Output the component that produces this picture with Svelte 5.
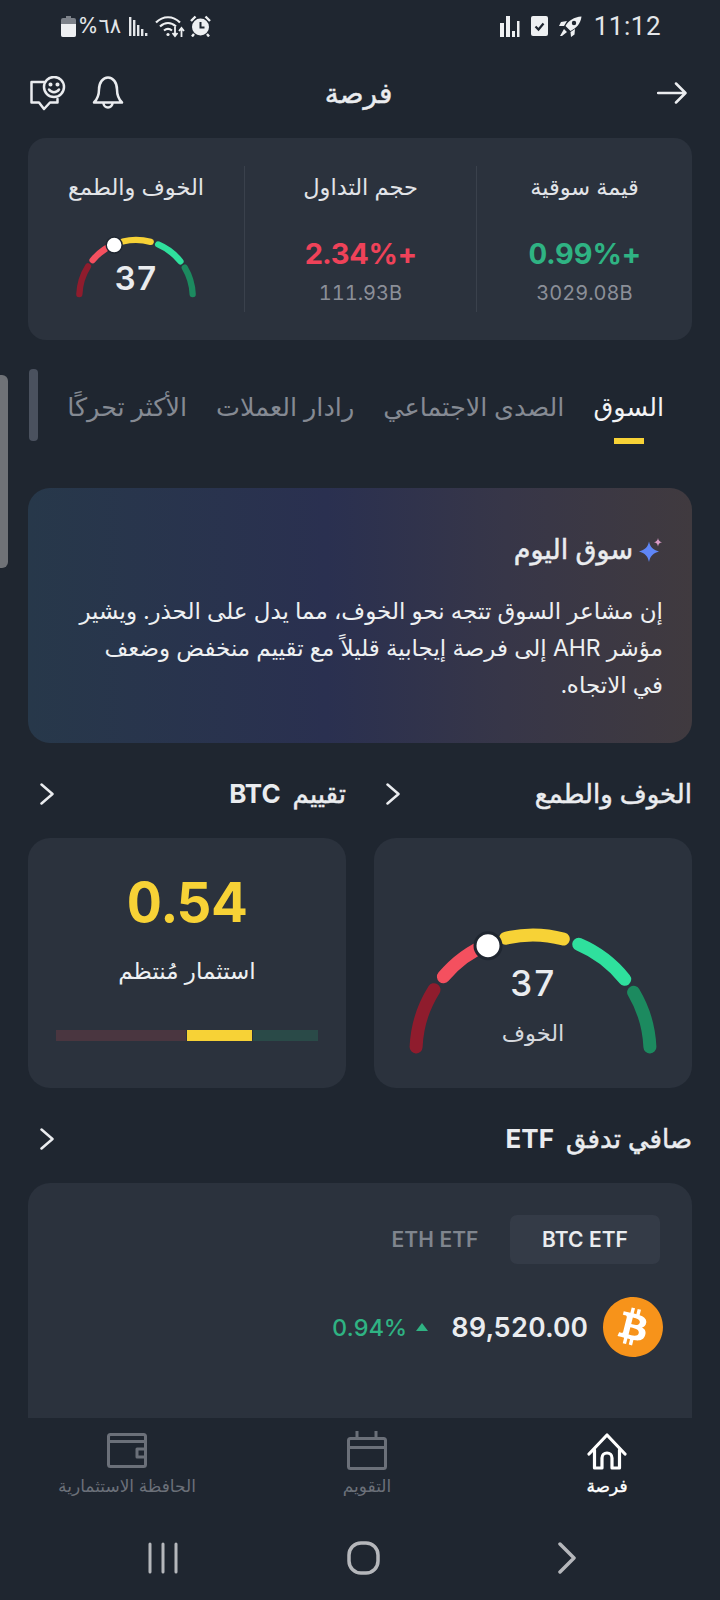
<script>
  // gauge arcs, angles in degrees measured from the right end of the dial
  const cx = 130;
  const cy = 125;
  const r = 117;

  const point = (deg) => {
    const rad = (deg * Math.PI) / 180;
    return `${(cx + r * Math.cos(rad)).toFixed(1)} ${(cy - r * Math.sin(rad)).toFixed(1)}`;
  };

  const segments = [
    { from: 177.5, to: 147.8, color: "#8f1c2d" },
    { from: 140, to: 112, color: "#f4505f" },
    { from: 103.5, to: 75, color: "#f7d236" },
    { from: 67, to: 38.4, color: "#2fe09d" },
    { from: 30.7, to: 2.5, color: "#1c8a5f" },
  ].map((s) => ({ ...s, d: `M${point(s.from)} A${r} ${r} 0 0 1 ${point(s.to)}` }));

  const stats = [
    { title: "قيمة سوقية", value: "+0.99%", sub: "3029.08B", tone: "up" },
    { title: "حجم التداول", value: "+2.34%", sub: "111.93B", tone: "down" },
  ];

  const tabs = ["السوق", "الصدى الاجتماعي", "رادار العملات", "الأكثر تحركًا"];
</script>

{#snippet gauge(width, height, knob)}
  <svg class="dial" {width} {height} viewBox="0 0 260 134" fill="none">
    {#each segments as s}
      <path d={s.d} stroke={s.color} stroke-width="13" stroke-linecap="round" />
    {/each}
    <circle cx="85" cy="18.7" r={knob} fill="#fff" stroke="#1f2630" stroke-width="3" />
  </svg>
{/snippet}

{#snippet chevron()}
  <svg class="chev" width="14" height="22" viewBox="0 0 14 22" fill="none">
    <path d="M1.5 1.5 12.5 11 1.5 20.5" stroke="#eaecef" stroke-width="2.5" stroke-linecap="round" stroke-linejoin="round" />
  </svg>
{/snippet}

<div class="screen">
  <div class="status">
    <div class="status-left">
      <svg width="15" height="21" viewBox="0 0 15 21">
        <path d="M5 0h5v2h3a2 2 0 0 1 2 2v15a2 2 0 0 1-2 2H2a2 2 0 0 1-2-2V4a2 2 0 0 1 2-2h3z" fill="#7d828a" />
        <path d="M0 8h15v11a2 2 0 0 1-2 2H2a2 2 0 0 1-2-2z" fill="#eef0f2" />
      </svg>
      <span class="pct" dir="rtl">٦٨%</span>
      <svg class="sig" width="19" height="19" viewBox="0 0 19 19" fill="#e4e6e9">
        <rect x="0" y="0" width="2.4" height="19" />
        <rect x="4" y="3" width="2.4" height="16" />
        <rect x="8" y="8" width="2.4" height="11" />
        <rect x="12" y="12" width="2.4" height="7" />
        <rect x="16" y="16" width="2.4" height="3" />
      </svg>
      <svg class="wifi" width="30" height="23" viewBox="0 0 30 23" fill="none" stroke="#eef0f2" stroke-width="2.2">
        <path d="M1 7.5C8 .5 18 .5 25 7.5" />
        <path d="M5 11.5c5-4.6 11-4.6 16 0" />
        <path d="M9 15.5c3-2.4 5-2.4 8 0" />
        <circle cx="13" cy="19.5" r="1.6" fill="#eef0f2" stroke="none" />
        <path d="M20 12v9M17.5 18l2.5 3 2.500-3M26.500 22v-9M24 16l2.500-3 2.500 3" stroke-width="1.800" />
      </svg>
      <svg class="alarm" width="21" height="22" viewBox="0 0 21 22">
        <circle cx="10.500" cy="12" r="8.500" fill="#eef0f2" />
        <path d="M1 6 5.500 1.500M20 6l-4.500-4.500M4 19l-2 2.500M17 19l2 2.500" stroke="#eef0f2" stroke-width="2.400" />
        <path d="M10.500 7v5.500h4" fill="none" stroke="#1f2630" stroke-width="2" />
      </svg>
    </div>
    <div class="status-right">
      <svg width="20" height="21" viewBox="0 0 20 21" fill="#eef0f2">
        <rect x="0" y="7" width="4" height="14" />
        <rect x="6" y="0" width="4" height="21" />
        <rect x="12" y="15" width="3" height="6" />
        <rect x="17" y="5" width="2.500" height="16" />
      </svg>
      <svg class="chk" width="17" height="20" viewBox="0 0 17 20">
        <rect width="17" height="20" rx="2" fill="#eef0f2" />
        <path d="M4.500 10.500 7.500 13.500 12.500 7.500" fill="none" stroke="#1f2630" stroke-width="2.200" />
      </svg>
      <svg class="rocket" width="23" height="21" viewBox="0 0 23 21" fill="#eef0f2">
        <path d="M22.500.5C15 1 9.500 4.500 6.500 10l5 5c6-3 10-7 11-14.500zM15 4.800a2.200 2.200 0 1 1 0 4.400 2.200 2.200 0 0 1 0-4.400z" fill-rule="evenodd" />
        <path d="M8 5 2 6 0 10h5zM16 13l-.5 5.500L12 21l-.5-5zM5 13l3 3-5 4H1z" />
      </svg>
      <span class="time">11:12</span>
    </div>
  </div>

  <header dir="rtl">
    <svg width="30" height="22" viewBox="0 0 30 22" fill="none">
      <path d="M1 11H28M19 1.500 28.500 11 19 20.500" stroke="#eaecef" stroke-width="2.500" stroke-linecap="round" stroke-linejoin="round" />
    </svg>
    <h1>فرصة</h1>
    <div class="head-icons">
      <svg width="32" height="34" viewBox="0 0 32 34" fill="none" stroke="#eaecef" stroke-width="2.500" stroke-linejoin="round">
        <path d="M2 26.500C5.500 23 7 20 7 13.500 7 6.500 11 1.500 16 1.500s9 5 9 12c0 6.500 1.500 9.500 5 13z" />
        <path d="M11.500 27a4.500 4.500 0 0 0 9 0" />
      </svg>
      <svg width="36" height="35" viewBox="0 0 36 35" fill="none" stroke="#eaecef" stroke-width="2.500" stroke-linejoin="round" stroke-linecap="round">
        <circle cx="24" cy="11" r="10" />
        <path d="M19 13.500c2.500 3.500 7.500 3.500 10 0" />
        <path d="M14 6H1.500v20.500H9l5 6.500 6-6.500h7.500V23" />
        <circle cx="20.500" cy="8.500" r=".8" fill="#eaecef" />
        <circle cx="27.500" cy="8.500" r=".8" fill="#eaecef" />
      </svg>
    </div>
  </header>

  <main dir="rtl">
    <section class="card overview">
      {#each stats as stat}
        <div class="stat">
          <div class="stat-title">{stat.title}</div>
          <div class="stat-value {stat.tone}">{stat.value}</div>
          <div class="stat-sub" dir="ltr">{stat.sub}</div>
        </div>
      {/each}
      <div class="stat">
        <div class="stat-title">الخوف والطمع</div>
        <div class="mini-gauge">
          {@render gauge(126, 65, 16.5)}
          <span class="mini-num">37</span>
        </div>
      </div>
    </section>

    <nav class="tabs">
      {#each tabs as tab, i}
        <div class="tab" class:active={i === 0}>
          <span>{tab}</span>
          {#if i === 0}<i class="underline"></i>{/if}
        </div>
      {/each}
      <i class="tab-edge"></i>
    </nav>

    <section class="insight">
      <h2>
        <svg width="24" height="24" viewBox="0 0 24 24">
          <path d="M10 3.500C11.200 9 14 11.800 20 13.500 14 15.200 11.200 18 10 24 8.800 18 6 15.200 0 13.500 6 11.800 8.800 9 10 3.500z" fill="#5f86f7" />
          <path d="M19 0c.5 2.600 1.400 3.600 4 4.200-2.600.6-3.500 1.600-4 4.300-.5-2.700-1.400-3.700-4-4.300 2.600-.6 3.500-1.600 4-4.200z" fill="#d99ac4" />
        </svg>
        سوق اليوم
      </h2>
      <p>إن مشاعر السوق تتجه نحو الخوف، مما يدل على الحذر. ويشير مؤشر AHR إلى فرصة إيجابية قليلاً مع تقييم منخفض وضعف في الاتجاه.</p>
    </section>

    <div class="pair heads">
      <div class="head-row"><h3>الخوف والطمع</h3>{@render chevron()}</div>
      <div class="head-row"><h3>تقييم <span class="lat">BTC</span></h3>{@render chevron()}</div>
    </div>

    <div class="pair">
      <section class="card fear">
        <div class="big-gauge">
          {@render gauge(260, 134, 13)}
          <span class="big-num">37</span>
          <span class="big-label">الخوف</span>
        </div>
      </section>
      <section class="card rating">
        <div class="rating-num">0.54</div>
        <div class="rating-label">استثمار مُنتظم</div>
        <div class="rating-bar">
          <i class="seg-green"></i>
          <i class="seg-yellow"></i>
          <i class="seg-red"></i>
        </div>
      </section>
    </div>

    <div class="head-row etf-head"><h3>صافي تدفق <span class="lat">ETF</span></h3>{@render chevron()}</div>

    <section class="card etf">
      <div class="etf-tabs">
        <span class="etf-tab on">BTC ETF</span>
        <span class="etf-tab">ETH ETF</span>
      </div>
      <div class="coin">
        <svg width="60" height="60" viewBox="0 0 24 24">
          <circle cx="12" cy="12" r="11.500" fill="#fff" />
          <path fill="#f7931a" d="M23.638 14.904c-1.602 6.43-8.113 10.34-14.542 8.736C2.67 22.05-1.244 15.525.362 9.105 1.962 2.67 8.475-1.243 14.9.358c6.43 1.605 10.342 8.115 8.738 14.548v-.002zm-6.35-4.613c.24-1.59-.974-2.45-2.64-3.03l.54-2.153-1.315-.33-.525 2.107c-.345-.087-.705-.167-1.064-.25l.526-2.127-1.32-.33-.54 2.165c-.285-.067-.565-.132-.84-.2l-1.815-.45-.35 1.407s.975.225.955.236c.535.136.63.486.615.766l-1.477 5.92c-.075.166-.24.406-.614.314.015.02-.96-.24-.96-.24l-.66 1.51 1.71.426.93.242-.54 2.19 1.32.327.54-2.17c.36.1.705.19 1.05.273l-.51 2.154 1.32.33.545-2.19c2.24.427 3.93.257 4.64-1.774.57-1.637-.03-2.58-1.217-3.196.854-.193 1.5-.76 1.68-1.93h.01zm-3.01 4.22c-.404 1.64-3.157.75-4.05.53l.72-2.9c.896.23 3.757.67 3.33 2.37zm.41-4.24c-.37 1.49-2.662.735-3.405.55l.654-2.64c.744.18 3.137.524 2.75 2.084v.006z" />
        </svg>
        <span class="price" dir="ltr">89,520.00</span>
        <i class="tri"></i>
        <span class="change" dir="ltr">0.94%</span>
      </div>
    </section>
  </main>

  <nav class="bottom" dir="rtl">
    <div class="item on">
      <svg width="40" height="40" viewBox="0 0 40 40" fill="none" stroke="#fff" stroke-width="3.200" stroke-linejoin="round" stroke-linecap="round">
        <path d="M2 23 20 4l18 19" />
        <path d="M7.500 19v18H15V27a5 5 0 0 1 10 0v10h7.500V19" />
      </svg>
      <span>فرصة</span>
    </div>
    <div class="item">
      <svg width="40" height="40" viewBox="0 0 40 40" fill="none" stroke="#6b7079" stroke-width="3" stroke-linejoin="round">
        <rect x="1.500" y="7.500" width="37" height="30" rx="2" />
        <path d="M1.500 16.500h37M10 0v7.500M29 0v7.500" />
      </svg>
      <span>التقويم</span>
    </div>
    <div class="item">
      <svg width="40" height="40" viewBox="0 0 40 40" fill="none" stroke="#6b7079" stroke-width="3" stroke-linejoin="round">
        <rect x="1.500" y="3.500" width="37" height="32" rx="2" />
        <path d="M1.500 10.500h37M38.500 18H30v8h8.500" />
      </svg>
      <span>الحافظة الاستثمارية</span>
    </div>
  </nav>

  <div class="system">
    <svg width="30" height="32" viewBox="0 0 30 32" stroke="#b5b7bb" stroke-width="3" stroke-linecap="round">
      <path d="M2 2v28M15 2v28M28 2v28" />
    </svg>
    <svg class="home-key" width="33" height="34" viewBox="0 0 33 34" fill="none">
      <rect x="2" y="2" width="29" height="30" rx="12" stroke="#b5b7bb" stroke-width="3.500" />
    </svg>
    <svg width="18" height="32" viewBox="0 0 18 32" fill="none">
      <path d="M2 2 16 16 2 30" stroke="#b5b7bb" stroke-width="3.500" stroke-linecap="round" stroke-linejoin="round" />
    </svg>
  </div>

  <i class="scrollbar"></i>
</div>

<style>
  :global(body) {
    background: #1f2630;
  }

  .screen {
    position: relative;
    display: flex;
    flex-direction: column;
    width: 720px;
    height: 1600px;
    overflow: hidden;
    background: #1f2630;
    color: #eaecef;
    font-family: "Inter", "Noto Sans", "DejaVu Sans", sans-serif;
    font-variant-numeric: tabular-nums;
  }

  h1,
  h2,
  h3,
  p {
    margin: 0;
  }

  /* status bar */
  .status {
    display: flex;
    justify-content: space-between;
    align-items: center;
    height: 48px;
    padding: 4px 59px 0 61px;
    box-sizing: border-box;
  }

  .status-left,
  .status-right {
    display: flex;
    align-items: center;
  }

  .pct {
    width: 42px;
    margin: 0 8px 0 3px;
    font-size: 21px;
    line-height: 26px;
    text-align: center;
    color: #e4e6e9;
  }

  .wifi {
    margin: 0 5px 0 7px;
  }

  .chk {
    margin: 0 11px 0 11px;
  }

  .rocket {
    margin-right: 12px;
  }

  .time {
    font-family: "Roboto", sans-serif;
    font-size: 26px;
    line-height: 30px;
    letter-spacing: 0.5px;
    color: #e4e6e9;
  }

  /* header */
  header {
    display: grid;
    grid-template-columns: 1fr auto 1fr;
    align-items: center;
    height: 90px;
    padding: 0 33px 0 30px;
    box-sizing: border-box;
  }

  h1 {
    font-size: 28px;
    line-height: 40px;
    font-weight: 400;
    -webkit-text-stroke: 0.5px #eaecef;
  }

  .head-icons {
    display: flex;
    justify-content: flex-start;
    align-items: center;
    gap: 26px;
    margin-right: auto;
  }

  main {
    display: flex;
    flex-direction: column;
    flex: 1;
    min-height: 0;
    padding: 0 28px;
  }

  .card {
    background: #2b323d;
    border-radius: 18px;
  }

  /* top card */
  .overview {
    display: grid;
    grid-template-columns: 216px 232px 216px;
    padding: 28px 0;
  }

  .stat {
    display: flex;
    flex-direction: column;
    align-items: center;
    height: 146px;
    border-left: 1px solid #3a414c;
  }

  .stat:last-child {
    border-left: 0;
  }

  .stat-title {
    font-size: 22.5px;
    line-height: 41px;
    color: #e2e4e8;
  }

  .stat-value {
    margin-top: 28px;
    font-size: 29px;
    line-height: 38px;
    font-weight: 700;
  }

  .up {
    color: #2fb383;
  }

  .down {
    color: #ef4259;
  }

  .stat-sub {
    margin-top: 6px;
    font-size: 20px;
    line-height: 28px;
    color: #8b8f98;
  }

  .mini-gauge {
    position: relative;
    margin-top: 29px;
    height: 65px;
  }

  .dial {
    display: block;
  }

  .mini-num {
    position: absolute;
    left: 0;
    right: 0;
    top: 22px;
    text-align: center;
    font-size: 33px;
    line-height: 40px;
    font-weight: 600;
  }

  /* tabs */
  .tabs {
    display: flex;
    gap: 29px;
    margin-top: 29px;
    padding-right: 28px;
  }

  .tab {
    display: flex;
    flex-direction: column;
    align-items: center;
    padding-top: 16px;
    font-size: 25.5px;
    line-height: 44px;
    white-space: nowrap;
    color: #858a93;
  }

  .tab.active {
    color: #f2f3f5;
  }

  .underline {
    width: 30px;
    height: 6px;
    margin-top: 9px;
    background: #f7d236;
  }

  .tab-edge {
    width: 9px;
    height: 72px;
    margin: 0 auto 0 1px;
    border-radius: 4px;
    background: #4a515e;
  }

  /* daily market card */
  .insight {
    height: 255px;
    box-sizing: border-box;
    margin-top: 44px;
    padding: 44px 29px 0 42px;
    border-radius: 22px;
    background: linear-gradient(90deg, #27384a 0%, #2a3050 45%, #373648 72%, #403a3f 100%);
  }

  .insight h2 {
    display: flex;
    align-items: center;
    gap: 6px;
    font-size: 27px;
    line-height: 36px;
    font-weight: 400;
    -webkit-text-stroke: 0.5px #eaecef;
  }

  .insight p {
    margin-top: 25px;
    font-size: 23px;
    line-height: 37px;
    color: #eef0f2;
  }

  /* two column rows */
  .pair {
    display: grid;
    grid-template-columns: 318px 318px;
    gap: 28px;
  }

  .heads {
    margin-top: 33px;
    margin-bottom: 26px;
  }

  .head-row {
    display: flex;
    justify-content: space-between;
    align-items: center;
    padding-left: 12px;
  }

  h3 {
    font-size: 26px;
    line-height: 36px;
    font-weight: 400;
    -webkit-text-stroke: 0.5px #eaecef;
  }

  .lat {
    margin-right: 5px;
    font-size: 26px;
    font-weight: 700;
    -webkit-text-stroke: 0;
  }

  .fear,
  .rating {
    height: 250px;
    box-sizing: border-box;
    border-radius: 22px;
  }

  .fear {
    padding-top: 89px;
  }

  .big-gauge {
    position: relative;
    width: 260px;
    margin: 0 auto;
  }

  .big-num {
    position: absolute;
    left: 0;
    right: 0;
    top: 36px;
    text-align: center;
    font-size: 35px;
    line-height: 40px;
    font-weight: 500;
  }

  .big-label {
    position: absolute;
    left: 0;
    right: 0;
    top: 90px;
    text-align: center;
    font-size: 22.5px;
    line-height: 32px;
    color: #d5d8dd;
  }

  .rating {
    padding: 34px 28px 0;
    text-align: center;
  }

  .rating-num {
    font-size: 54.5px;
    line-height: 60px;
    font-weight: 700;
    color: #f7d236;
  }

  .rating-label {
    margin-top: 21px;
    font-size: 23px;
    line-height: 36px;
    color: #eef0f2;
  }

  .rating-bar {
    display: flex;
    gap: 1px;
    height: 11px;
    margin-top: 41px;
  }

  .seg-green {
    flex: 65;
    background: #2a4a48;
  }

  .seg-yellow {
    flex: 65;
    background: #f7d236;
  }

  .seg-red {
    flex: 130;
    background: #4a3640;
  }

  /* etf */
  .etf-head {
    margin-top: 33px;
  }

  .etf {
    flex: 1;
    margin-top: 26px;
    padding: 32px 29px 0;
    border-radius: 22px 22px 0 0;
  }

  .etf-tabs {
    display: flex;
    margin-right: 3px;
  }

  .etf-tab {
    width: 150px;
    height: 49px;
    line-height: 49px;
    border-radius: 7px;
    text-align: center;
    font-size: 21px;
    font-weight: 600;
    color: #7f858e;
  }

  .etf-tab.on {
    background: #343b47;
    color: #eaecef;
  }

  .coin {
    display: flex;
    align-items: center;
    margin-top: 33px;
  }

  .price {
    margin-right: 15px;
    font-size: 27px;
    font-weight: 600;
  }

  .tri {
    width: 0;
    height: 0;
    margin: 0 23px 0 9px;
    border-left: 6px solid transparent;
    border-right: 6px solid transparent;
    border-bottom: 8px solid #2fb383;
  }

  .change {
    font-size: 23.5px;
    font-weight: 500;
    color: #2fb383;
  }

  /* bottom nav */
  .bottom {
    display: grid;
    grid-template-columns: repeat(3, 240px);
    justify-content: center;
    padding: 13px 0 0 14px;
  }

  .item {
    display: flex;
    flex-direction: column;
    align-items: center;
    gap: 3px;
    font-size: 17px;
    line-height: 24px;
    color: #6b7079;
  }

  .item.on {
    color: #fff;
    -webkit-text-stroke: 0.4px #fff;
  }

  .system {
    display: flex;
    justify-content: space-between;
    align-items: center;
    height: 34px;
    margin: 43px 0 25px;
    padding: 0 144px 0 148px;
  }

  .home-key {
    margin-right: 9px;
  }

  .scrollbar {
    position: absolute;
    left: 0;
    top: 375px;
    width: 8px;
    height: 193px;
    border-radius: 0 6px 6px 0;
    background: #6f7277;
  }
</style>
